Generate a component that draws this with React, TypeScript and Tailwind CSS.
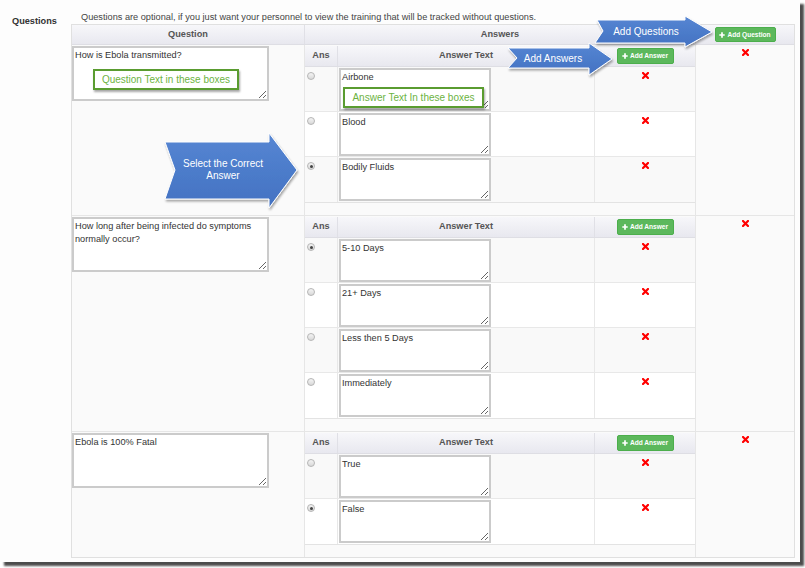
import React from 'react';

type Answer = { text: string; correct?: boolean };
type Question = { text: string; answers: Answer[] };

const questions: Question[] = [
  {
    text: 'How is Ebola transmitted?',
    answers: [{ text: 'Airbone' }, { text: 'Blood' }, { text: 'Bodily Fluids', correct: true }],
  },
  {
    text: 'How long after being infected do symptoms normally occur?',
    answers: [
      { text: '5-10 Days', correct: true },
      { text: '21+ Days' },
      { text: 'Less then 5 Days' },
      { text: 'Immediately' },
    ],
  },
  {
    text: 'Ebola is 100% Fatal',
    answers: [{ text: 'True' }, { text: 'False', correct: true }],
  },
];

function RemoveIcon() {
  return (
    <svg width="7" height="7" viewBox="0 0 7 7">
      <path d="M1 1L6 6M6 1L1 6" stroke="#ff0000" strokeWidth="2.2" strokeLinecap="square" />
    </svg>
  );
}

function AddButton({ label, wide }: { label: string; wide?: boolean }) {
  return (
    <div
      className={`flex items-center justify-center gap-[2px] rounded-[2px] border border-[#4cae4c] bg-[#5cb85c] text-[6.6px] font-bold text-white ${
        wide ? 'w-[61px] h-[15px]' : 'w-[57px] h-[16px]'
      }`}
    >
      <svg width="6" height="6" viewBox="0 0 6 6">
        <path d="M3 0.3V5.7M0.3 3H5.7" stroke="white" strokeWidth="1.7" />
      </svg>
      {label}
    </div>
  );
}

function Radio({ checked }: { checked?: boolean }) {
  return (
    <div className="w-[8px] h-[8px] rounded-full border border-[#b5b5b5] bg-gradient-to-b from-[#f4f4f4] to-[#d9d9d9] flex items-center justify-center">
      {checked && <div className="w-[3px] h-[3px] rounded-full bg-[#444]" />}
    </div>
  );
}

function AnswersTable({ answers }: { answers: Answer[] }) {
  return (
    <div className="w-[390px] border-b border-[#e3e3e3]">
      <div className="grid grid-cols-[33px_257px_100px] h-[21px] bg-gradient-to-b from-[#f7f7fa] to-[#e8e8ef] border-b border-[#dedee4] text-[9.2px] font-bold text-[#555]">
        <div className="flex items-center justify-center border-r border-[#e0e0e6]">Ans</div>
        <div className="flex items-center justify-center border-r border-[#e0e0e6]">Answer Text</div>
        <div className="flex items-center justify-center">
          <AddButton label="Add Answer" />
        </div>
      </div>
      {answers.map((a, i) => (
        <div
          key={a.text}
          className={`grid grid-cols-[33px_257px_100px] h-[45px] border-b border-[#e8e8e8] last:border-b-0 ${
            i % 2 === 0 ? 'bg-[#f9f9f9]' : 'bg-white'
          }`}
        >
          <div className="border-r border-[#e8e8e8] pt-[5px] pl-[2px]">
            <Radio checked={a.correct} />
          </div>
          <div className="border-r border-[#e8e8e8] pt-[1px] pl-[1px]">
            <textarea
              readOnly
              defaultValue={a.text}
              className="block w-[152px] h-[43px] border-2 border-[#cbcbcb] bg-white px-[1px] pt-[1px] text-[9.2px] leading-[13px] text-[#333] font-['Liberation_Sans',Arial,sans-serif] outline-none"
            />
          </div>
          <div className="flex justify-center pt-[5px]">
            <RemoveIcon />
          </div>
        </div>
      ))}
    </div>
  );
}

export default function App() {
  return (
    <div className="w-[805px] h-[568px] bg-white overflow-hidden font-['Liberation_Sans',Arial,sans-serif]">
      <div className="relative w-[800px] h-[562px] bg-[#fdfdfd] shadow-[4px_4px_2px_rgba(0,0,0,0.7)]">
        <div className="flex pt-[11px]">
          <div className="w-[71px] pl-[12px] pt-[4px] text-[9.2px] leading-[13px] font-bold text-[#333]">Questions</div>
          <div>
            <p className="pl-[10px] text-[9.2px] leading-[13px] text-[#444]">
              Questions are optional, if you just want your personnel to view the training that will be tracked without questions.
            </p>
            <div className="border border-[#e0e0e0] w-[724px]">
              {/* header */}
              <div className="grid grid-cols-[233px_391px_98px] h-[20px] bg-gradient-to-b from-[#f7f7fa] to-[#e8e8ef] border-b border-[#dedee4] text-[9.2px] font-bold text-[#555]">
                <div className="flex items-center justify-center border-r border-[#e0e0e6]">Question</div>
                <div className="flex items-center justify-center border-r border-[#e0e0e6]">Answers</div>
                <div className="flex items-center justify-center">
                  <AddButton label="Add Question" wide />
                </div>
              </div>
              {questions.map((q) => (
                <div key={q.text} className="grid grid-cols-[233px_391px_98px] border-b border-[#e6e6e6] last:border-b-0">
                  <div className="bg-[#fafafa] border-r border-[#e6e6e6] pt-[1px]">
                    <textarea
                      readOnly
                      defaultValue={q.text}
                      className="block w-[197px] h-[55px] border-2 border-[#cbcbcb] bg-white px-[1px] pt-[1px] text-[9.2px] leading-[13px] text-[#333] font-['Liberation_Sans',Arial,sans-serif] outline-none"
                    />
                  </div>
                  <div className="bg-[#fafafa] border-r border-[#e6e6e6] pt-[1px] pb-[12px]">
                    <AnswersTable answers={q.answers} />
                  </div>
                  <div className="bg-[#fafafa] flex justify-center pt-[4px]">
                    <RemoveIcon />
                  </div>
                </div>
              ))}
            </div>
          </div>
        </div>

        {/* callouts */}
        <div className="absolute left-[93px] top-[69px] w-[146px] h-[21px] border-2 border-[#5a9c30] bg-white shadow-[1px_2px_2px_rgba(0,0,0,0.35)] flex items-center justify-center text-[10px] text-[#6cb33f]">
          Question Text in these boxes
        </div>
        <div className="absolute left-[343px] top-[87px] w-[141px] h-[21px] border-2 border-[#5a9c30] bg-white shadow-[1px_2px_2px_rgba(0,0,0,0.35)] flex items-center justify-center text-[10px] text-[#6cb33f]">
          Answer Text In these boxes
        </div>

        <svg className="absolute left-0 top-0 pointer-events-none" width="800" height="562">
          <defs>
            <linearGradient id="blue" x1="0" y1="0" x2="0" y2="1">
              <stop offset="0" stopColor="#5686d3" />
              <stop offset="1" stopColor="#4372c2" />
            </linearGradient>
            <filter id="sh" x="-10%" y="-10%" width="130%" height="140%">
              <feDropShadow dx="1" dy="2" stdDeviation="1" floodColor="#000" floodOpacity="0.35" />
            </filter>
          </defs>
          <polygon
            points="597,20 685,20 685,16 712,32 685,47 685,43 595,43 603,31"
            fill="url(#blue)"
            stroke="#fff"
            strokeWidth="1"
            filter="url(#sh)"
          />
          <text x="646" y="34.5" textAnchor="middle" fill="#fff" fontSize="10" fontFamily="Liberation Sans, Arial, sans-serif">
            Add Questions
          </text>
          <polygon
            points="508,48 589,48 589,43 612,59 589,75 589,68 508,68 517,58"
            fill="url(#blue)"
            stroke="#fff"
            strokeWidth="1"
            filter="url(#sh)"
          />
          <text x="553" y="61.5" textAnchor="middle" fill="#fff" fontSize="10" fontFamily="Liberation Sans, Arial, sans-serif">
            Add Answers
          </text>
          <polygon
            points="165,142 269,142 269,133 297,170 269,208 269,199 165,199 175,170"
            fill="url(#blue)"
            stroke="#fff"
            strokeWidth="1"
            filter="url(#sh)"
          />
          <text x="223" y="167" textAnchor="middle" fill="#fff" fontSize="10" fontFamily="Liberation Sans, Arial, sans-serif">
            Select the Correct
          </text>
          <text x="223" y="179" textAnchor="middle" fill="#fff" fontSize="10" fontFamily="Liberation Sans, Arial, sans-serif">
            Answer
          </text>
        </svg>
      </div>
    </div>
  );
}
